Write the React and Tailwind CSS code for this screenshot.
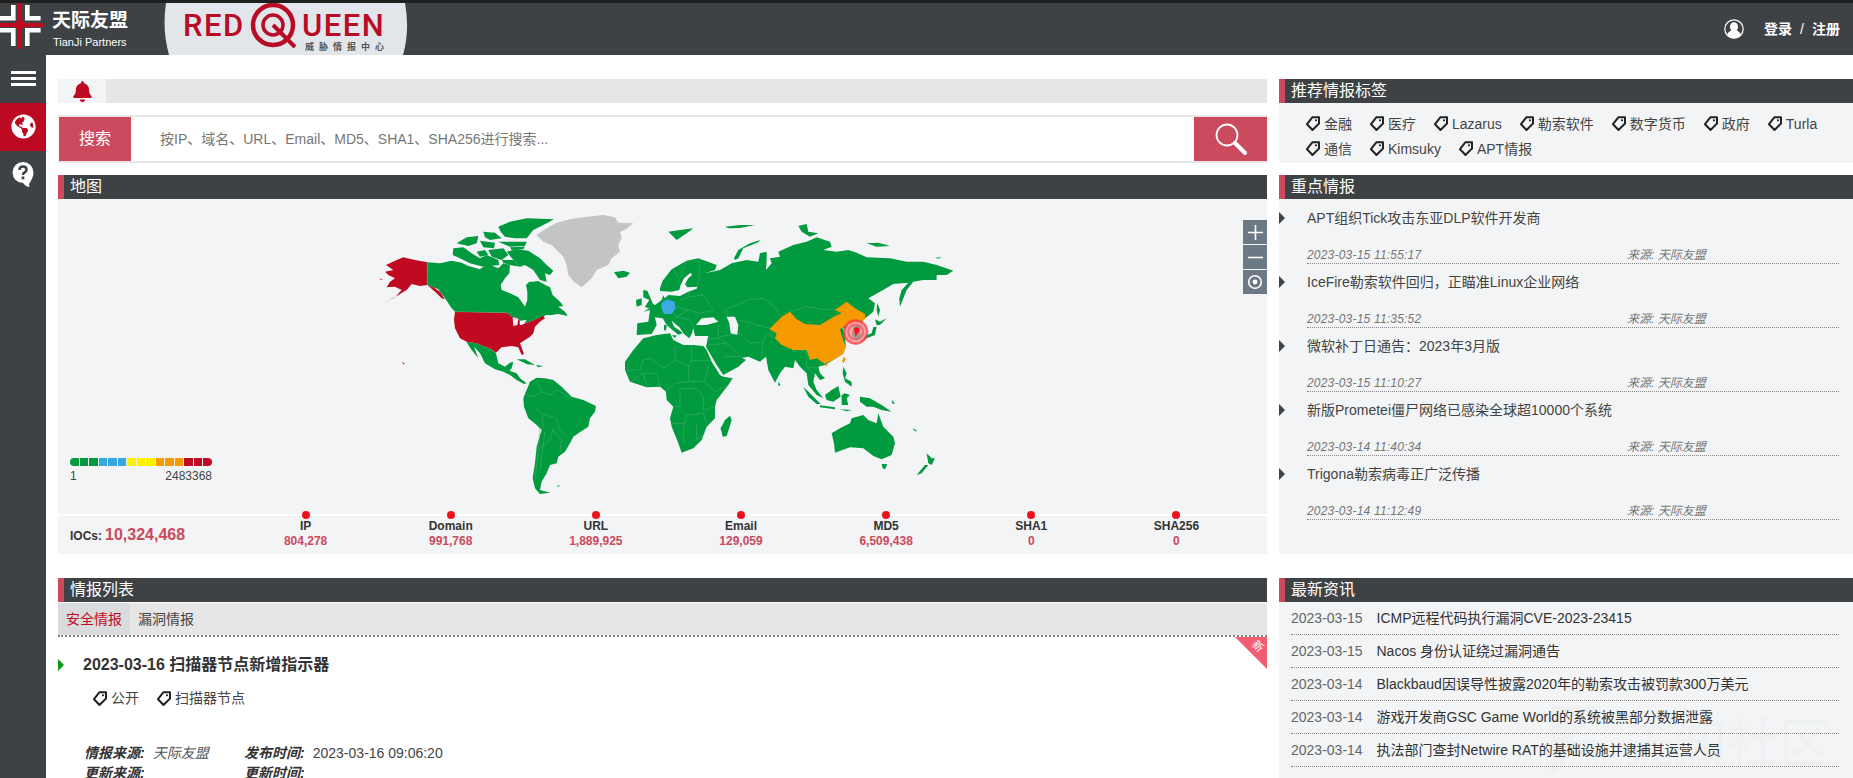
import { FaBell, FaGlobeAmericas } from 'react-icons/fa';

const GREEN = '#019a3e';
const RED = '#c00a22';
const LINE = '#4fb078';
const SEA = '#f2f4f6';

// coordinates below are read off 3x crops of the map, west and east halves
const westLand = [
  '172,157 210,160 245,152 275,158 295,168 330,178 340,170 360,165 385,175 400,160 420,165 418,190 405,205 392,225 395,240 420,250 445,262 458,280 465,290 472,270 472,245 468,225 478,215 490,215 505,213 520,222 540,232 548,255 570,275 580,288 565,290 585,305 593,318 565,312 545,315 528,315 520,320 505,325 480,335 465,340 450,345 445,325 425,320 410,308 255,305 245,295 225,265 205,238 172,225',
  '410,125 440,118 475,122 510,145 530,165 550,182 540,195 525,190 530,215 510,210 490,180 465,165 450,170 430,150',
  '250,115 280,112 305,130 330,145 350,135 385,150 388,165 340,170 300,160 270,145 248,135',
  '355,120 400,115 415,135 395,150 365,140',
  '395,150 430,150 450,170 420,165 400,158',
  '345,120 355,135 330,140 320,125',
  '385,50 420,35 470,25 552,28 520,45 490,60 470,85 435,85 405,80 392,65',
  '260,100 290,82 325,78 320,100 295,108',
  '340,65 375,68 395,85 360,90 345,82',
  '385,95 470,95 465,108 420,110',
  '330,92 375,98 372,115 340,112',
  '420,112 465,110 460,118 425,120',
  '290,395 320,400 340,408 360,415 378,430 385,460 405,470 420,458 430,455 425,475 418,482 440,490 450,505 470,520 462,522 440,510 420,495 400,485 375,478 345,460 330,430 312,410 325,445 305,420 295,405',
  '440,448 465,448 495,465 470,462',
  '498,465 520,468 505,472',
  '480,515 500,503 525,505 550,510 575,530 605,560 640,570 678,588 675,605 660,625 655,650 625,670 610,680 600,700 585,725 565,740 560,760 540,765 530,790 515,815 510,840 540,848 510,852 495,835 488,805 495,760 500,710 515,660 500,645 475,625 462,590 460,565 470,540',
  '560,828 570,825 566,830',
  '732,187 760,182 780,188 770,200 745,205',
  '820,240 832,242 848,280 862,292 835,295 825,290 838,270 820,262',
  '798,270 815,265 815,285 800,290',
];

const westRed = [
  '172,157 172,225 150,228 125,222 110,240 80,258 45,277 75,262 95,240 75,230 50,232 60,215 75,205 55,195 45,185 70,180 48,165 75,152 100,142 135,150',
  '172,225 190,232 210,245 225,268 215,265 200,250',
  '28,205 40,210 32,209',
  '95,455 105,462 100,463',
  '255,305 410,308 425,320 445,325 450,345 480,335 505,325 520,318 525,325 510,335 495,350 490,370 480,380 450,400 462,432 455,435 445,412 425,408 395,412 378,428 360,415 340,408 320,400 290,395 270,385 255,355 252,330',
];

const westSeaLakes = ['428,322 445,326 442,345 430,348', '450,332 470,330 462,342 450,345'];

const westLines = [
  '500,510 515,545 540,555 560,540 580,550 605,565',
  '515,545 490,560 470,555',
  '490,590 515,610 520,650 505,660',
  '515,610 560,625 570,660 590,680',
  '545,655 575,690 570,730',
  '510,660 505,720 495,810',
  '505,720 540,690 550,655',
  '525,665 510,780',
  '172,157 172,225',
  '255,305 410,308',
];

const greenland = '500,75 530,55 560,38 600,28 650,20 700,15 735,22 745,38 790,40 765,60 750,65 755,85 745,105 750,125 725,145 715,165 680,180 665,205 635,232 612,215 595,195 590,165 580,140 565,125 545,105 520,95';

const eastLand = [
  // eurasia
  '0,235 8,212 35,178 80,152 115,145 170,165 165,180 135,190 180,180 215,160 260,150 295,155 300,130 320,125 320,150 318,180 335,160 330,145 360,140 355,125 400,105 440,95 470,82 510,95 515,110 490,120 530,125 565,120 590,128 620,142 690,145 740,155 790,155 830,165 880,182 860,195 830,195 830,210 790,210 760,215 740,240 720,290 718,265 725,240 745,218 700,222 660,245 625,265 645,280 640,305 612,328 600,345 602,385 585,395 570,390 565,365 545,350 555,370 557,410 550,430 520,450 495,465 475,470 480,490 495,505 480,510 465,490 460,515 470,540 490,565 470,555 445,525 440,490 420,470 405,450 400,475 375,470 360,490 345,518 325,480 318,440 300,455 265,440 240,445 215,425 205,410 225,432 258,450 235,470 190,495 170,465 138,410 145,378 105,378 100,355 95,372 88,385 72,372 58,352 35,332 42,350 60,362 68,370 55,374 40,362 20,345 8,325 -15,322 -10,345 -25,372 -70,375 -68,340 -35,335 -30,300 -50,305 -15,285 5,270 12,250 0,250',
  // africa
  '-105,455 -80,420 -50,385 -10,375 30,370 40,390 70,405 100,405 130,408 140,420 155,455 180,495 190,500 218,505 205,525 170,570 165,590 165,625 140,650 125,690 100,715 65,728 55,700 35,650 30,625 40,590 20,570 18,545 0,530 -40,532 -90,515 -105,480',
  '210,617 215,630 200,678 188,680 182,655 195,630',
  '35,376 50,376 45,384',
  '12,345 20,345 18,362 12,360',
  '652,278 660,300 655,320 650,300',
  '645,328 660,335 680,325 660,345 650,345',
  '650,350 645,375 620,385 600,395 595,402 612,378 635,370 640,352',
  '430,530 450,550 482,582 470,582 445,560',
  '480,586 525,592 525,598 480,592',
  '495,555 515,540 535,528 542,560 520,575 500,570',
  '545,555 555,550 570,555 560,565 565,585 545,585',
  '550,470 560,490 555,505 575,515 575,530 555,515 548,490',
  '600,560 630,565 665,585 695,605 665,600 640,590 620,590 600,575',
  '540,598 575,600 560,604',
  '515,670 540,655 570,640 575,625 610,615 625,630 650,640 655,610 670,650 700,680 705,700 695,735 665,748 640,738 610,715 570,712 525,728 522,700',
  '665,762 682,762 675,778 668,775',
  '800,730 815,745 825,745 815,765 805,760',
  '795,765 805,765 785,790 770,795',
  '757,653 772,663 765,664',
  '25,65 60,60 100,55 80,70 50,90 35,75',
  '195,50 240,45 285,45 240,54 205,55',
  '222,145 235,120 270,100 302,90 295,97 250,115 235,145 225,150',
  '415,48 440,42 445,65 475,70 450,80 425,65',
  '620,100 655,98 690,108 650,110',
  '825,143 845,142 835,146',
  '355,515 362,525 355,528',
  '695,570 705,580 698,582',
];

const eastSeas = [
  '200,320 225,320 235,345 232,375 212,370 208,340',
  '108,345 125,325 160,322 175,335 140,345',
  '92,188 72,205 62,225 58,240 35,245 0,243 -10,250 8,252 14,265 25,255 60,258 85,245 110,236 112,230 82,232 75,222 85,205 96,195',
];

const eastLines = [
  '95,405 95,452 85,470 85,515',
  '95,452 150,452',
  '-105,480 -60,480 -50,450 -30,445 10,475 45,450 45,410',
  '45,450 90,470',
  '85,515 45,520 20,540',
  '85,515 135,515 165,545 205,525',
  '135,515 145,470',
  '60,535 60,590 40,590',
  '60,535 110,535 130,560 130,600 165,590',
  '35,640 75,640 80,615 130,610 140,640',
  '70,645 70,700',
  '110,640 110,690 135,670',
  '-90,515 -50,490 -10,490 0,530',
  '-50,490 -40,530',
  '195,300 265,270 310,265 335,280 362,318',
  '390,305 440,290 490,298 530,298',
  '195,300 205,320',
  '240,330 290,345 330,355',
  '240,370 270,400 310,395 320,370 345,385',
  '310,395 305,440',
  '345,385 400,420 440,420',
  '440,420 440,470 470,475',
  '175,345 175,385 210,405',
  '180,380 240,370',
  '140,385 175,385',
  '145,405 195,400 235,430',
  '190,440 245,440',
  '90,260 130,255 160,300 120,310 85,300 50,320 30,300',
  '60,270 90,260 85,245',
  '112,230 120,190 115,145',
  '45,290 85,300',
  '45,320 90,330 100,350',
  '40,175 55,205',
  '80,152 60,205',
  '440,470 470,505',
];

const china = '328,358 365,320 390,305 410,328 435,342 480,345 525,318 545,310 525,300 560,275 585,295 615,312 615,328 585,345 560,345 540,358 545,375 557,410 550,432 520,450 495,462 470,445 450,450 440,420 400,420 365,405 345,385 350,370';
const germany = '5,278 22,268 44,275 46,295 35,312 12,312 4,295';

const WorldMap = () => (
  <svg className="block" width="1209" height="315" viewBox="58 199 1209 315">
    <g transform="translate(370 210) scale(0.3333)">
      <polygon points={greenland} fill="#c3c4c6" />
      {westLand.map((p, i) => <polygon key={i} points={p} fill={GREEN} />)}
      {westRed.map((p, i) => <polygon key={i} points={p} fill={RED} />)}
      {westSeaLakes.map((p, i) => <polygon key={i} points={p} fill={SEA} />)}
      {westLines.map((p, i) => <polyline key={i} points={p} fill="none" stroke={LINE} strokeWidth="1.5" />)}
    </g>
    <g transform="translate(660 210) scale(0.3333)">
      {eastLand.map((p, i) => <polygon key={i} points={p} fill={GREEN} />)}
      {eastSeas.map((p, i) => <polygon key={i} points={p} fill={SEA} />)}
      {eastLines.map((p, i) => <polyline key={i} points={p} fill="none" stroke={LINE} strokeWidth="1.5" />)}
      <polygon points={china} fill="#f59a00" />
      <polygon points="552,440 558,448 550,460 546,452" fill="#f59a00" />
      <polygon points="495,462 503,462 500,470" fill="#f59a00" />
      <polygon points={germany} fill="#3fa9e5" />
      <circle cx="587" cy="366" r="38" fill="#ff3c46" opacity="0.8" />
      <circle cx="587" cy="366" r="31" fill="#ffa6ab" opacity="0.9" />
      <circle cx="587" cy="366" r="25" fill="#f0606a" opacity="0.9" />
      <circle cx="587" cy="366" r="19" fill="#ffb0b4" opacity="0.9" />
      <polygon points="578,350 600,345 602,380 590,392 576,378" fill="#7f8f80" opacity="0.7" />
      <circle cx="590" cy="360" r="8" fill="#ff1020" />
      <polygon points="583,364 597,364 587,380" fill="#ff1020" />
    </g>
  </svg>
);

const legendColors = [
  'bg-[#019a3e] rounded-l-full', 'bg-[#019a3e]', 'bg-[#019a3e]',
  'bg-[#35a8e0]', 'bg-[#35a8e0]', 'bg-[#35a8e0]',
  'bg-[#fff000]', 'bg-[#fff000]', 'bg-[#fff000]',
  'bg-[#f59a00]', 'bg-[#f59a00]', 'bg-[#f59a00]',
  'bg-[#c00a22]', 'bg-[#c00a22]', 'bg-[#c00a22] rounded-r-full',
];

const stats = [
  { name: 'IP', value: '804,278' },
  { name: 'Domain', value: '991,768' },
  { name: 'URL', value: '1,889,925' },
  { name: 'Email', value: '129,059' },
  { name: 'MD5', value: '6,509,438' },
  { name: 'SHA1', value: '0' },
  { name: 'SHA256', value: '0' },
];

const tagsRow1 = ['金融', '医疗', 'Lazarus', '勒索软件', '数字货币', '政府', 'Turla'];
const tagsRow2 = ['通信', 'Kimsuky', 'APT情报'];

const keyIntel = [
  { title: 'APT组织Tick攻击东亚DLP软件开发商', date: '2023-03-15 11:55:17' },
  { title: 'IceFire勒索软件回归，正瞄准Linux企业网络', date: '2023-03-15 11:35:52' },
  { title: '微软补丁日通告：2023年3月版', date: '2023-03-15 11:10:27' },
  { title: '新版Prometei僵尸网络已感染全球超10000个系统', date: '2023-03-14 11:40:34' },
  { title: 'Trigona勒索病毒正广泛传播', date: '2023-03-14 11:12:49' },
];

const news = [
  { date: '2023-03-15', title: 'ICMP远程代码执行漏洞CVE-2023-23415' },
  { date: '2023-03-15', title: 'Nacos 身份认证绕过漏洞通告' },
  { date: '2023-03-14', title: 'Blackbaud因误导性披露2020年的勒索攻击被罚款300万美元' },
  { date: '2023-03-14', title: '游戏开发商GSC Game World的系统被黑部分数据泄露' },
  { date: '2023-03-14', title: '执法部门查封Netwire RAT的基础设施并逮捕其运营人员' },
];

const TagIcon = () => (
  <svg width="14" height="15" viewBox="0 0 14 15" className="shrink-0">
    <path d="M6.5 1.2 L13 1.2 L13 7.5 L6.5 14 L1 8.2 Z" fill="none" stroke="#222" strokeWidth="2" strokeLinejoin="round" />
    <circle cx="10" cy="4.3" r="1.1" fill="#222" />
  </svg>
);

const Tag = ({ label }) => (
  <div className="flex items-center gap-1 text-sm text-[#444]">
    <TagIcon />
    <span>{label}</span>
  </div>
);

const SectionTitle = ({ children }) => (
  <div className="h-6 bg-[#3e4245] border-l-[6px] border-[#cb4a5d] pl-1.5 text-base leading-6 text-white">
    {children}
  </div>
);

const Arrow = ({ color }) => (
  <svg width="6" height="12" viewBox="0 0 6 12" className="shrink-0">
    <polygon points="0,0 6,6 0,12" fill={color} />
  </svg>
);

const TianjiMark = () => (
  <svg width="46" height="52" viewBox="0 3 46 52" className="shrink-0">
    <rect x="18" y="3" width="4" height="46" fill={RED} />
    <rect x="0" y="23" width="44" height="4" fill={RED} />
    <circle cx="20" cy="25" r="5" fill={RED} />
    <path d="M11 5 h4.6 v15.6 h-15.6 v-4.6 h11 z" fill="#fff" />
    <path d="M25 5 h4.6 v11 h11 v4.6 h-15.6 z" fill="#fff" />
    <path d="M0 28 h15.6 v18 h-4.6 v-13.4 h-11 z" fill="#fff" />
    <path d="M25 28 h15.6 v4.6 h-11 v13.4 h-4.6 z" fill="#fff" />
  </svg>
);

const RedQueenLogo = () => (
  <svg width="244" height="52" viewBox="164 3 244 52" className="ml-[34px] shrink-0">
    <path d="M166 3 L405 3 Q410 30 403 55 L169 55 Q162 30 166 3 Z" fill="#e2e6ea" />
    <text x="183" y="36" fontSize="31" fontWeight="500" fontFamily="Roboto, sans-serif" letterSpacing="1.5" fill="#b80b25">RED</text>
    <circle cx="273" cy="25" r="20" fill="none" stroke="#b80b25" strokeWidth="4.5" />
    <circle cx="273" cy="25" r="10" fill="none" stroke="#b80b25" strokeWidth="3.5" />
    <path d="M273 25 L295 47" stroke="#b80b25" strokeWidth="4" />
    <text x="302" y="36" fontSize="31" fontWeight="500" fontFamily="Roboto, sans-serif" letterSpacing="1.5" fill="#b80b25">UEEN</text>
    <text x="305" y="50" fontSize="9" fontWeight="700" letterSpacing="5" fill="#555">威胁情报中心</text>
  </svg>
);

const UserIcon = () => (
  <svg width="20" height="20" viewBox="0 0 20 20">
    <circle cx="10" cy="10" r="9.2" fill="#3e4245" stroke="#fff" strokeWidth="1.2" />
    <ellipse cx="10" cy="8" rx="4" ry="4.8" fill="#fff" />
    <path d="M3 16.5 Q4 12.5 7.5 11.5 L12.5 11.5 Q16 12.5 17 16.5 Q10 22 3 16.5 Z" fill="#fff" />
  </svg>
);

const HelpIcon = () => (
  <svg width="22" height="26" viewBox="0 0 22 26">
    <path d="M11 0 A10.5 10.5 0 0 1 21.5 10.5 C21.5 15 19 19 17 22 L17.5 25 C14 24.5 12.5 22.5 11 21 A10.5 10.5 0 0 1 11 0 Z" fill="#fff" />
    <path d="M7.5 8 Q7.5 4.5 11 4.5 Q14.5 4.5 14.5 7.5 Q14.5 9.5 12.5 10.5 Q11 11.2 11 13" fill="none" stroke="#3e4245" strokeWidth="2.6" />
    <rect x="9.6" y="14.5" width="2.8" height="2.8" fill="#3e4245" />
  </svg>
);

const SearchIcon = () => (
  <svg width="34" height="34" viewBox="0 0 34 34">
    <circle cx="13" cy="13" r="10.5" fill="none" stroke="#fff" strokeWidth="1.8" />
    <path d="M21 21 L31 31" stroke="#fff" strokeWidth="4" strokeLinecap="round" />
  </svg>
);

const WatermarkIcon = () => (
  <svg width="52" height="66" viewBox="0 0 52 66">
    <path d="M0 0 H50 L22 34 H50 V50 H18 L4 66 H0 Z" fill="#eef0f2" />
  </svg>
);

const App = () => {
  return (
    <div className="h-[778px] w-[1853px] overflow-hidden flex flex-col bg-white font-['Liberation_Sans','Noto_Sans_CJK_SC',sans-serif] text-[#333]">
      <header className="h-[55px] shrink-0 border-t-[3px] border-[#1f1f1f] bg-[#3e4245] flex items-center">
        <TianjiMark />
        <div className="ml-1.5 flex w-[78px] flex-col items-start text-white">
          <span className="text-[19px] leading-[22px] font-bold">天际友盟</span>
          <span className="mt-[3px] ml-px text-[11px] leading-[14px]">TianJi Partners</span>
        </div>
        <RedQueenLogo />
        <div className="ml-auto mr-[13px] flex items-center text-sm font-bold text-white">
          <UserIcon />
          <span className="ml-5">登录</span>
          <span className="mx-2 font-normal">/</span>
          <span>注册</span>
        </div>
      </header>

      <div className="flex flex-1 min-h-0">
        <aside className="w-[46px] shrink-0 bg-[#3e4245] flex flex-col items-center">
          <div className="mt-4 flex w-[25px] flex-col gap-[3.5px]">
            <div className="h-[2.5px] bg-white" />
            <div className="h-[2.5px] bg-white" />
            <div className="h-[2.5px] bg-white" />
          </div>
          <div className="mt-[17px] flex h-12 w-full items-center justify-center bg-[#bc0a22]">
            <FaGlobeAmericas className="text-white" size={25} />
          </div>
          <div className="mt-[11px]">
            <HelpIcon />
          </div>
        </aside>

        <main className="flex flex-1 min-w-0 gap-3 pt-6 pl-3">
          <div className="w-[1209px] shrink-0">
            <div className="flex h-6 bg-[#e6e6e6]">
              <div className="flex w-12 items-center justify-center bg-[#f2f4f6]">
                <FaBell className="text-[#c00a22]" size={21} />
              </div>
            </div>

            <div className="mt-3 flex h-12 border-y-2 border-[#e6e6e6] bg-white">
              <div className="ml-px flex w-[72px] items-center justify-center bg-[#cb4a5d] text-base text-white">搜索</div>
              <div className="flex flex-1 items-center pl-[29px] text-sm text-[#777]">按IP、域名、URL、Email、MD5、SHA1、SHA256进行搜索...</div>
              <div className="flex w-[73px] items-center justify-center bg-[#cb4a5d]">
                <SearchIcon />
              </div>
            </div>

            <div className="mt-3">
              <SectionTitle>地图</SectionTitle>
              <div className="relative bg-[#f2f4f6]">
                <WorldMap />
                <div className="absolute left-3 top-[259px] w-[142px]">
                  <div className="flex h-2 gap-px">
                    {legendColors.map((c, i) => <div key={i} className={`flex-1 ${c}`} />)}
                  </div>
                  <div className="mt-[3px] flex justify-between text-xs leading-[14px] text-[#444]">
                    <span>1</span>
                    <span>2483368</span>
                  </div>
                </div>
                <div className="absolute right-0 top-[21px] flex flex-col gap-px">
                  <div className="flex h-6 w-6 items-center justify-center bg-[#6d7885]">
                    <svg width="15" height="15" viewBox="0 0 15 15"><path d="M7.5 0 V15 M0 7.5 H15" stroke="#fff" strokeWidth="1.6" /></svg>
                  </div>
                  <div className="flex h-6 w-6 items-center justify-center bg-[#6d7885]">
                    <svg width="15" height="15" viewBox="0 0 15 15"><path d="M0 7.5 H15" stroke="#fff" strokeWidth="1.6" /></svg>
                  </div>
                  <div className="flex h-6 w-6 items-center justify-center bg-[#6d7885]">
                    <svg width="16" height="16" viewBox="0 0 16 16">
                      <circle cx="8" cy="8" r="6.3" fill="none" stroke="#fff" strokeWidth="1.6" />
                      <circle cx="8" cy="8" r="2.4" fill="#fff" />
                    </svg>
                  </div>
                </div>
              </div>
              <div className="flex h-10 items-center border-t-2 border-white bg-[#f2f4f6] pl-3">
                <div className="flex w-[163px] items-baseline font-bold">
                  <span className="text-xs text-[#333]">IOCs:</span>
                  <span className="ml-[3px] text-base text-[#cb4a5d]">10,324,468</span>
                </div>
                <div className="grid flex-1 grid-cols-7 pr-[18px]">
                  {stats.map((s) => (
                    <div key={s.name} className="relative -mt-[2px] flex flex-col items-center text-xs font-bold leading-[15px]">
                      <div className="absolute -top-[8px] h-2 w-2 rounded-full bg-[#f01018]" />
                      <span className="text-[#333]">{s.name}</span>
                      <span className="text-[#cb4a5d]">{s.value}</span>
                    </div>
                  ))}
                </div>
              </div>
            </div>

            <div className="mt-6">
              <SectionTitle>情报列表</SectionTitle>
              <div className="mt-px flex h-8 bg-[#e6e6e6] text-sm leading-8">
                <div className="w-[72px] bg-[#dadbdc] text-center text-[#c00a22]">安全情报</div>
                <div className="w-[72px] text-center text-[#444]">漏洞情报</div>
              </div>
              <div className="relative border-t-2 border-dotted border-[#888]">
                <div className="absolute right-0 top-0 h-0 w-0 border-l-[32px] border-t-[32px] border-l-transparent border-t-[#f45d70]" />
                <span className="absolute right-[4px] top-[3px] rotate-45 text-[11px] leading-[13px] text-white">新</span>
                <div className="flex items-center pt-4">
                  <Arrow color="#0a9a10" />
                  <span className="ml-[19px] text-base font-bold leading-6 text-[#333]">2023-03-16 扫描器节点新增指示器</span>
                </div>
                <div className="mt-[11px] ml-[35px] flex gap-[18px]">
                  <Tag label="公开" />
                  <Tag label="扫描器节点" />
                </div>
                <div className="mt-[35px] ml-[26px] text-sm leading-[20px]">
                  <div className="flex">
                    <div className="flex w-[160px]">
                      <span className="font-bold italic">情报来源:</span>
                      <span className="ml-2 italic text-[#555]">天际友盟</span>
                    </div>
                    <span className="font-bold italic">发布时间:</span>
                    <span className="ml-2 text-[#444]">2023-03-16 09:06:20</span>
                  </div>
                  <div className="flex">
                    <div className="w-[160px] font-bold italic">更新来源:</div>
                    <span className="font-bold italic">更新时间:</span>
                  </div>
                </div>
              </div>
            </div>
          </div>

          <div className="min-w-0 flex-1">
            <SectionTitle>推荐情报标签</SectionTitle>
            <div className="h-[60px] bg-[#f2f4f6] pl-[27px] pt-2">
              <div className="flex h-[25px] items-center gap-[18px]">
                {tagsRow1.map((t) => <Tag key={t} label={t} />)}
              </div>
              <div className="flex h-[25px] items-center gap-[18px]">
                {tagsRow2.map((t) => <Tag key={t} label={t} />)}
              </div>
            </div>

            <div className="mt-3">
              <SectionTitle>重点情报</SectionTitle>
              <div className="h-[355px] bg-[#f2f4f6] pt-px">
                {keyIntel.map((item) => (
                  <div key={item.date} className="flex h-16">
                    <div className="flex h-9 items-center"><Arrow color="#3e4245" /></div>
                    <div className="ml-[22px] mr-[14px] flex-1 border-b border-dotted border-[#888]">
                      <div className="h-9 text-sm leading-9 text-[#444]">{item.title}</div>
                      <div className="mt-3 flex text-xs italic leading-[14px] text-[#777]">
                        <span className="w-[320px] tracking-[0.2px]">{item.date}</span>
                        <span>来源: 天际友盟</span>
                      </div>
                    </div>
                  </div>
                ))}
              </div>
            </div>

            <div className="mt-6">
              <SectionTitle>最新资讯</SectionTitle>
              <div className="relative h-[200px] overflow-hidden bg-[#f2f4f6] pl-3 pr-[14px]">
                <div className="absolute left-[272px] top-[104px]">
                  <WatermarkIcon />
                </div>
                <span className="absolute left-[344px] top-[112px] text-[52px] leading-[60px] text-[#eef0f2]">先知社区</span>
                {news.map((n) => (
                  <div key={n.title} className="relative flex h-[33px] border-b border-dotted border-[#888] text-sm leading-[32px]">
                    <span className="w-[85.5px] text-[#666]">{n.date}</span>
                    <span className="text-[#333]">{n.title}</span>
                  </div>
                ))}
              </div>
            </div>
          </div>
        </main>
      </div>
    </div>
  );
};

export default App;
